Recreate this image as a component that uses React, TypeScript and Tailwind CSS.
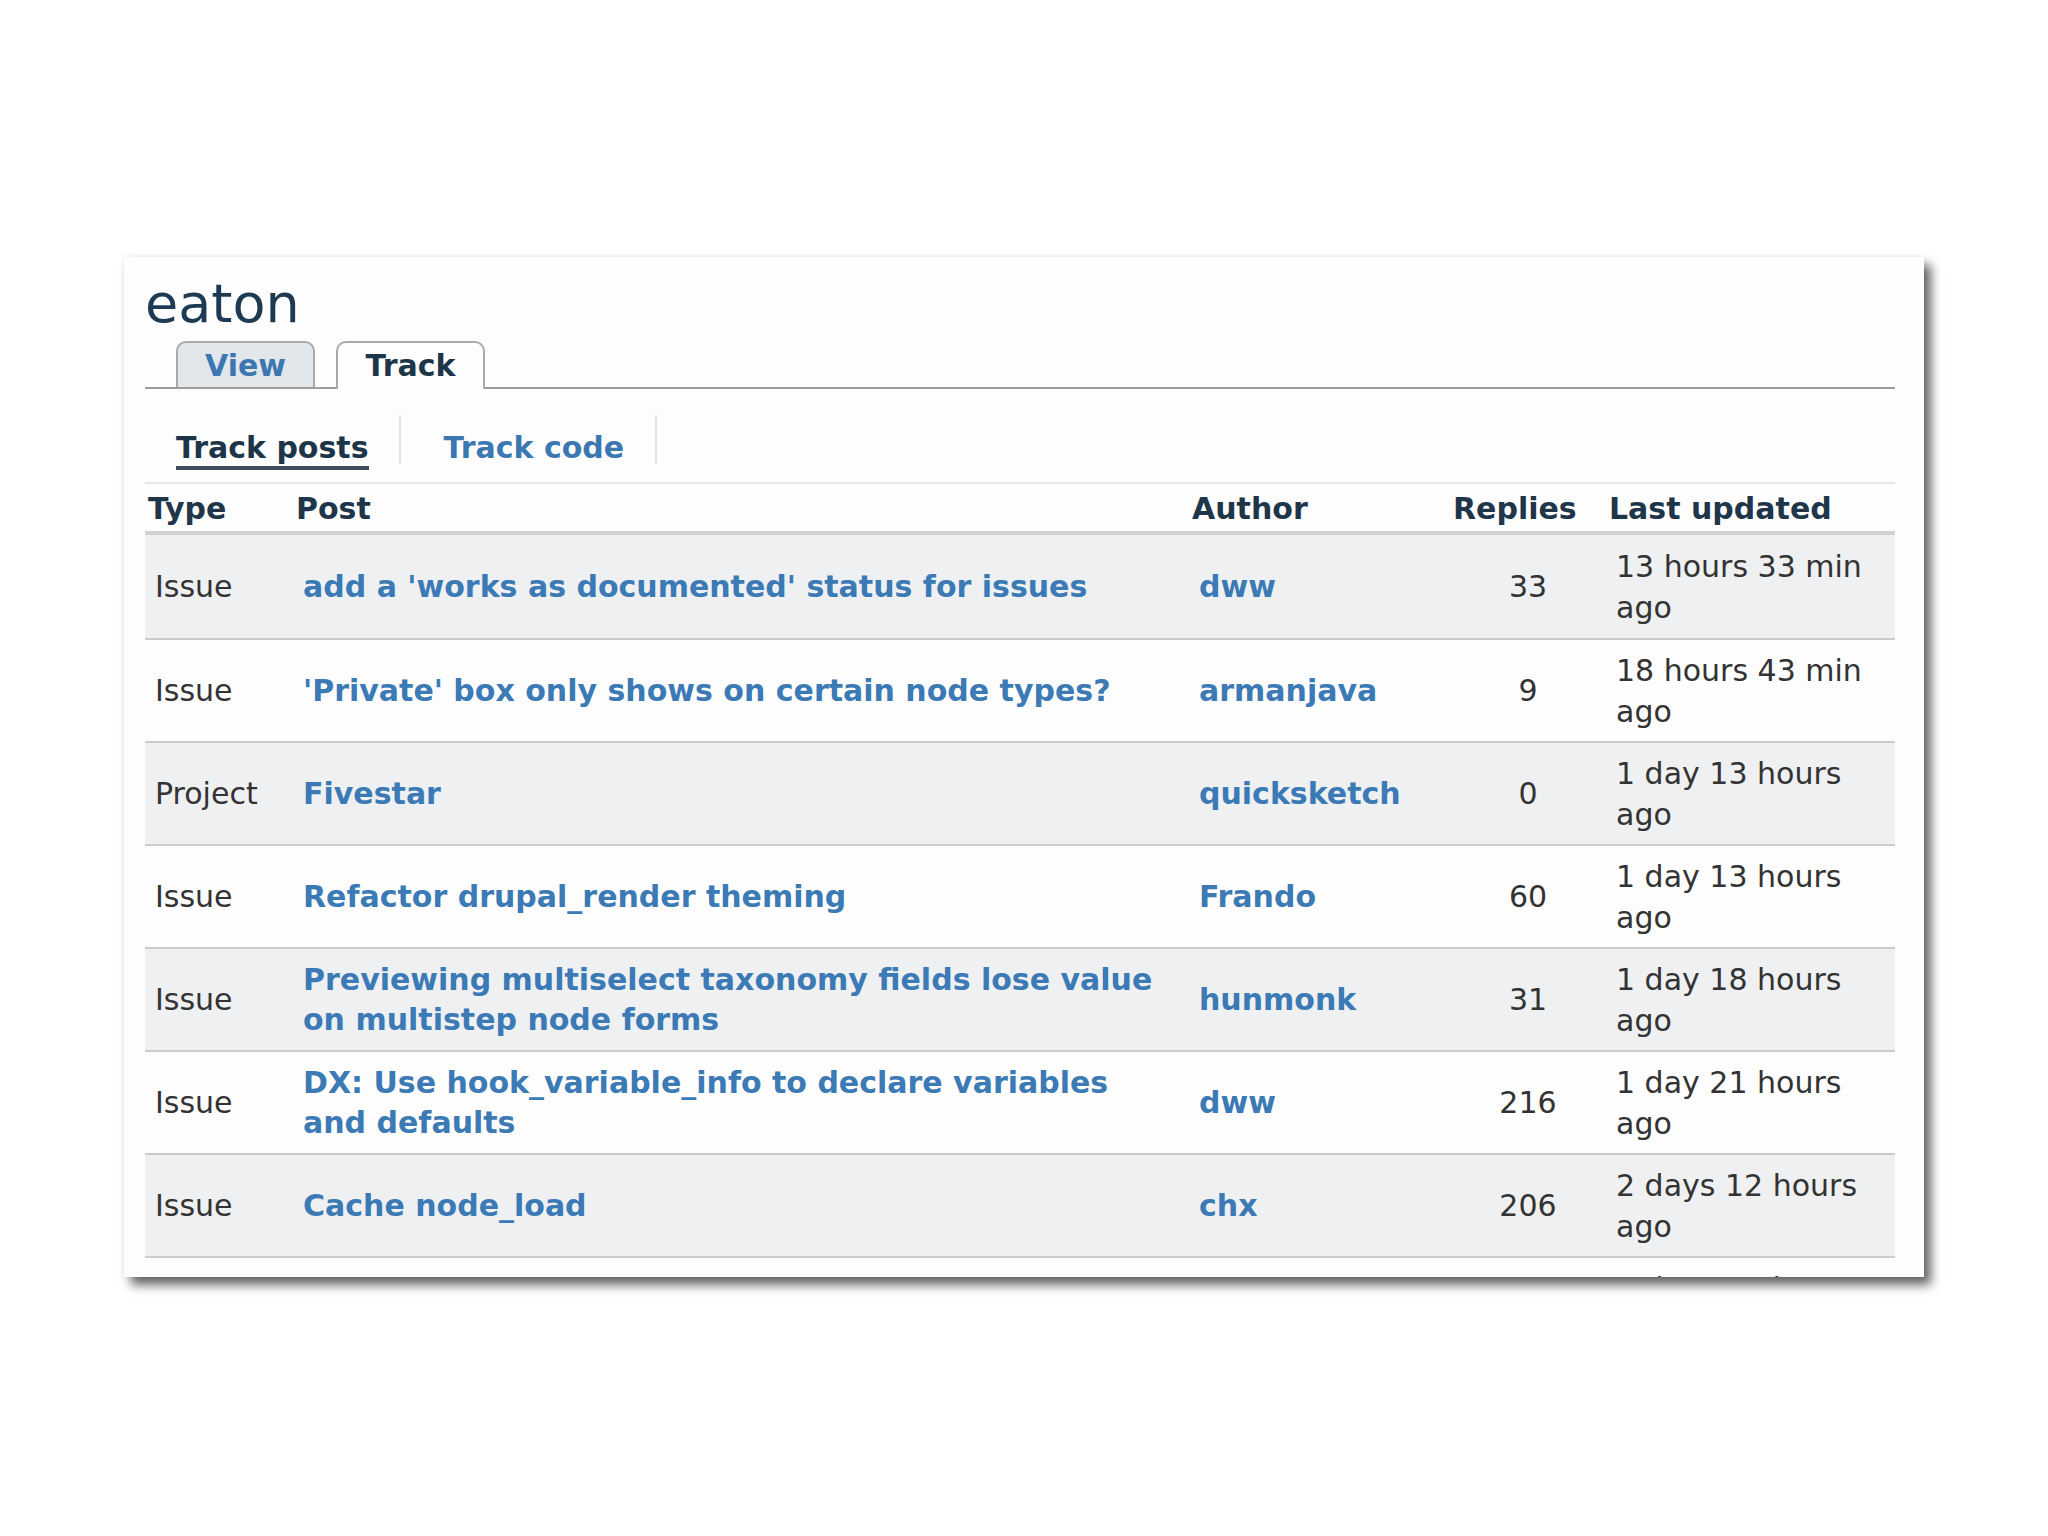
import React from "react";

type Row = {
  type: string;
  post: string;
  author: string;
  replies: string;
  updated: [string, string];
};

const rows: Row[] = [
  { type: "Issue", post: "add a 'works as documented' status for issues", author: "dww", replies: "33", updated: ["13 hours 33 min", "ago"] },
  { type: "Issue", post: "'Private' box only shows on certain node types?", author: "armanjava", replies: "9", updated: ["18 hours 43 min", "ago"] },
  { type: "Project", post: "Fivestar", author: "quicksketch", replies: "0", updated: ["1 day 13 hours", "ago"] },
  { type: "Issue", post: "Refactor drupal_render theming", author: "Frando", replies: "60", updated: ["1 day 13 hours", "ago"] },
  { type: "Issue", post: "Previewing multiselect taxonomy fields lose value on multistep node forms", author: "hunmonk", replies: "31", updated: ["1 day 18 hours", "ago"] },
  { type: "Issue", post: "DX: Use hook_variable_info to declare variables and defaults", author: "dww", replies: "216", updated: ["1 day 21 hours", "ago"] },
  { type: "Issue", post: "Cache node_load", author: "chx", replies: "206", updated: ["2 days 12 hours", "ago"] },
  { type: "Issue", post: "Make node_load static cache resettable", author: "catch", replies: "14", updated: ["2 days 13 hours", "ago"] },
];

export default function App() {
  return (
    <div className="min-h-[1536px] w-[2048px] bg-white pt-[257px] font-['DejaVu_Sans',Verdana,sans-serif]">
      <div className="ml-[124px] h-[1020px] w-[1800px] overflow-hidden bg-[#fdfdfd] pl-[21px] pr-[29px] pt-[20px] shadow-[0_0_6px_rgba(0,0,0,0.08),7px_8px_10px_rgba(0,0,0,0.6)]">
        {/* Title */}
        <h1 className="text-[54px] leading-[54px] font-normal text-[#1e3a52]">eaton</h1>

        {/* Primary tabs */}
        <div className="mt-[10px] flex items-end gap-[21px] border-b-2 border-[#9c9c9c] pl-[31px]">
          <div className="flex h-[46px] w-[139px] items-center justify-center rounded-t-[10px] border-2 border-b-0 border-[#a9a9a9] bg-[#e2e7eb] text-[30px] font-bold text-[#3b78b2]">
            View
          </div>
          <div className="-mb-[2px] flex h-[48px] w-[149px] items-center justify-center rounded-t-[10px] border-2 border-b-0 border-[#a9a9a9] bg-[#fdfdfd] pb-[2px] text-[30px] font-bold text-[#1d3549]">
            Track
          </div>
        </div>

        {/* Secondary tabs */}
        <div className="flex h-[95px] items-start border-b-2 border-[#e4e6e8] pl-[31px]">
          <div className="mt-[41px] border-b-4 border-[#3f4f5f] text-[30px] leading-[36px] font-bold text-[#1d3549]">
            Track posts
          </div>
          <div className="ml-[30px] mt-[26px] h-[49px] w-[2px] bg-[#e3e3e3]" />
          <div className="ml-[43px] mt-[41px] text-[30px] leading-[36px] font-bold text-[#3b78b2]">
            Track code
          </div>
          <div className="ml-[31px] mt-[26px] h-[49px] w-[2px] bg-[#e3e3e3]" />
        </div>

        {/* Table */}
        <table className="w-[1750px] table-fixed border-collapse text-[30px]">
          <colgroup>
            <col className="w-[148px]" />
            <col className="w-[896px]" />
            <col className="w-[261px]" />
            <col className="w-[156px]" />
            <col className="w-[289px]" />
          </colgroup>
          <thead>
            <tr className="border-b-4 border-[#d0d1d2] text-left font-bold text-[#1f364a]">
              <th className="h-[49px] pl-[3px] pt-[2px] leading-[36px]">Type</th>
              <th className="pl-[3px] pt-[2px] leading-[36px]">Post</th>
              <th className="pl-[3px] pt-[2px] leading-[36px]">Author</th>
              <th className="pl-[3px] pt-[2px] leading-[36px]">Replies</th>
              <th className="pl-[3px] pt-[2px] leading-[36px]">Last updated</th>
            </tr>
          </thead>
          <tbody>
            {rows.map((r, i) => (
              <tr
                key={i}
                className={
                  i % 2 === 0
                    ? "border-b-2 border-[#c9cbcd] bg-[#eef0f2]"
                    : "border-b-2 border-[#c9cbcd] bg-[#fdfdfd]"
                }
              >
                <td className={i === 0 ? "h-[106px] pl-[10px] align-middle leading-[40px] text-[#333]" : "h-[103px] pl-[10px] align-middle leading-[40px] text-[#333]"}>
                  {r.type}
                </td>
                <td className="pl-[10px] pr-[10px] align-middle leading-[40px] font-bold text-[#3b7ab5]">{r.post}</td>
                <td className="pl-[10px] align-middle leading-[40px] font-bold text-[#3b7ab5]">{r.author}</td>
                <td className="px-[10px] text-center align-middle leading-[40px] text-[#333]">{r.replies}</td>
                <td className="pl-[10px] pr-[10px] align-middle leading-[41px] text-[#333]">
                  {r.updated[0]}
                  <br />
                  {r.updated[1]}
                </td>
              </tr>
            ))}
          </tbody>
        </table>
      </div>
    </div>
  );
}
